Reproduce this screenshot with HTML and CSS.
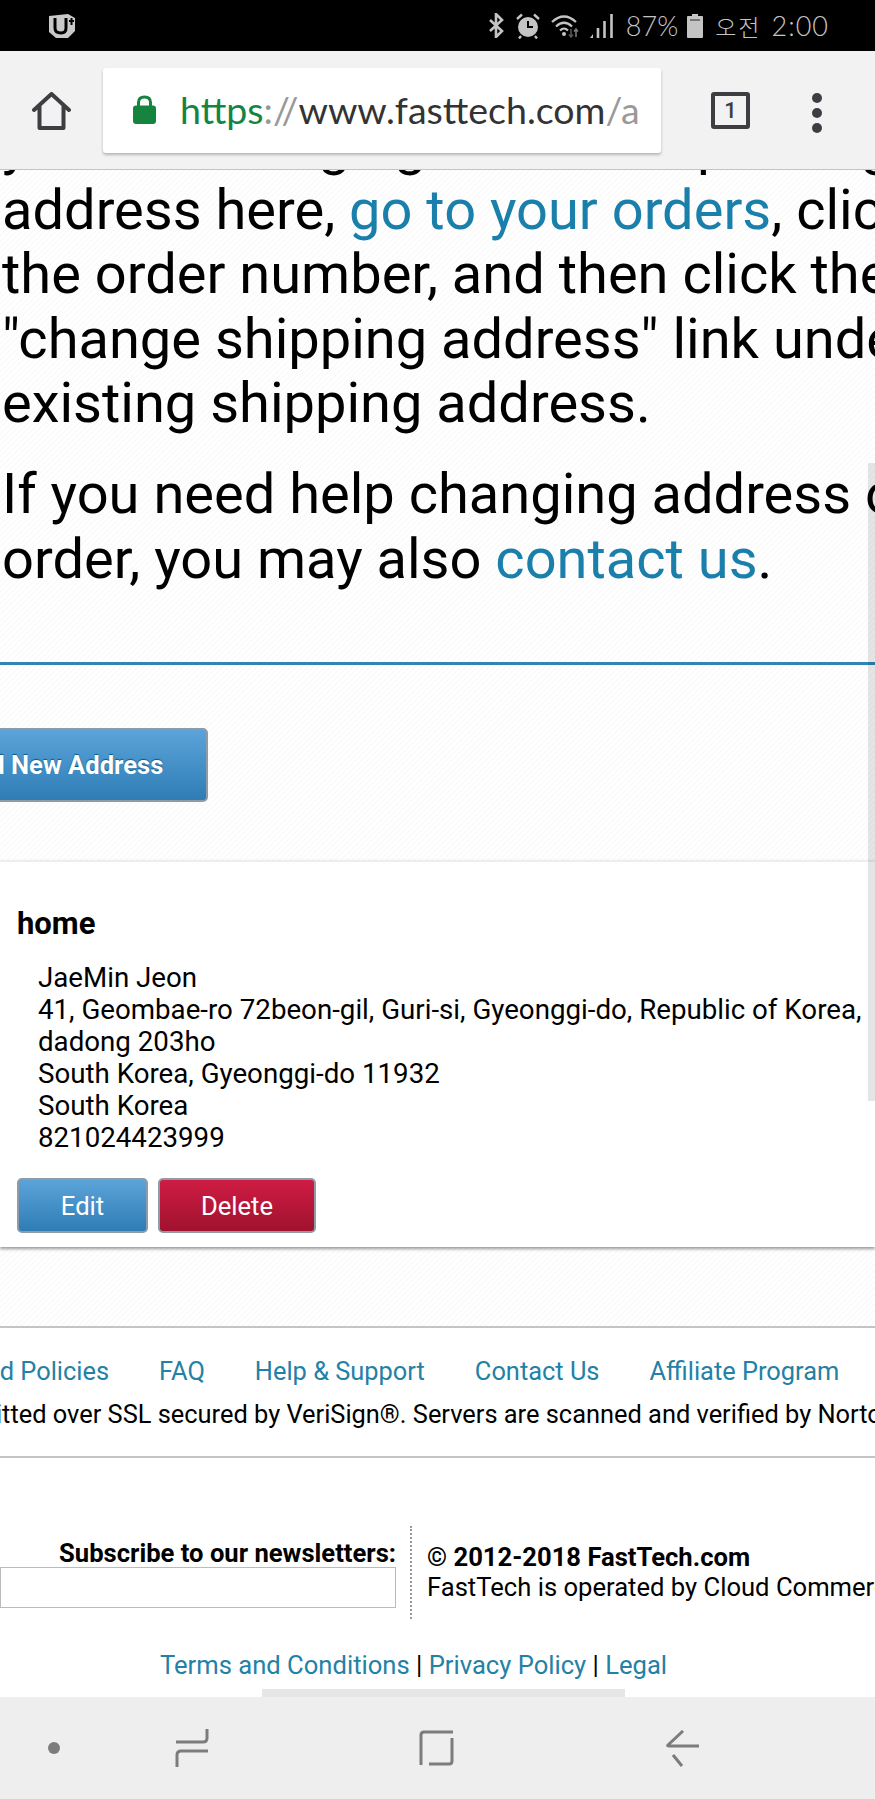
FILE: index.html
```html
<!DOCTYPE html>
<html>
<head>
  <meta charset="utf-8" />
  <title>Address Book</title>
  <meta name="viewport" content="width=device-width, initial-scale=1">
  <link rel="stylesheet" href="styles.css">
</head>
<body>
  <div class="status">
    <svg class="status-logo" viewBox="0 0 31 26">
      <path d="M3 3 L22 1 L29 5 L29 18 L22 25 L10 25 L3 19 Z" fill="#c9c9c9" />
      <path d="M9 5 V15 Q9 20 15 20 Q20 20 20 15 V5" fill="none" stroke="#000" stroke-width="3" />
      <path d="M23 8 h5 M25.5 5 v7" stroke="#000" stroke-width="2" />
    </svg>
    <div class="status-right">
      <svg class="ic-bt" viewBox="0 0 16 25"><path d="M2 7 L14 18 L8 24 V1 L14 7 L2 18" fill="none" stroke="#c4c4c4" stroke-width="2.6" /></svg>
      <svg class="ic-alarm" viewBox="0 0 26 26">
        <circle cx="13" cy="14" r="10" fill="#c4c4c4" />
        <path d="M13 8 V14 H18" fill="none" stroke="#000" stroke-width="2" />
        <path d="M2 6 L7 1.5 M24 6 L19 1.5 M6 23 L4 25.5 M20 23 L22 25.5" stroke="#c4c4c4" stroke-width="2.4" />
      </svg>
      <svg class="ic-wifi" viewBox="0 0 28 24">
        <path d="M1 8 Q13 -3 25 8 M5 12.5 Q13 5 21 12.5 M9 16.5 Q13 12.5 17 16.5" fill="none" stroke="#c4c4c4" stroke-width="2.2" />
        <circle cx="13" cy="20" r="2" fill="#c4c4c4" />
        <path d="M20 15 V23 M18 20.5 L20 23 L22 20.5" fill="none" stroke="#555" stroke-width="1.6" />
        <path d="M25 23 V15 M23 17.5 L25 15 L27 17.5" fill="none" stroke="#777" stroke-width="1.6" />
      </svg>
      <svg class="ic-signal" viewBox="0 0 25 26">
        <path d="M1 25 L4 21 V25 Z" fill="#c4c4c4" />
        <path d="M9 25 V15 M15.5 25 V8 M22.5 25 V1" stroke="#c4c4c4" stroke-width="2.6" />
      </svg>
      <span class="pct">87%</span>
      <svg class="ic-batt" viewBox="0 0 16 24">
        <path d="M5 0 H11 V2 H15 Q16 2 16 3 V23 Q16 24 15 24 H1 Q0 24 0 23 V3 Q0 2 1 2 H5 Z" fill="#c4c4c4" />
        <path d="M3 6 H13" stroke="#555" stroke-width="1.4" />
      </svg>
      <span class="ampm">오전</span>
      <span class="clock">2:00</span>
    </div>
  </div>

  <div class="toolbar">
    <svg class="ic-home" viewBox="0 0 39 38">
      <path d="M2 18 L19.5 2 L37 18 M7.5 14 V36 H31.5 V14" fill="none" stroke="#3e3e42" stroke-width="4" stroke-linejoin="round" stroke-linecap="round" />
    </svg>
    <div class="urlbar">
      <svg class="ic-lock" viewBox="0 0 23 29">
        <path d="M5.5 12 V7.5 Q5.5 2 11.5 2 Q17.5 2 17.5 7.5 V12" fill="none" stroke="#16843f" stroke-width="3" />
        <rect x="0" y="10.5" width="23" height="18.5" rx="3" fill="#16843f" />
      </svg>
      <div class="url"><span class="url-scheme">https</span><span class="url-sep">://</span>www.fasttech.com<span class="url-sep">/a</span></div>
    </div>
    <div class="tabs">1</div>
    <div class="menu"><i></i><i></i><i></i></div>
  </div>

  <main class="page">
    <section class="intro">
      <p class="first">you are changing an order's packing<br>address here, <a href="#">go to your orders</a>, click<br>the order number, and then click the<br>"change shipping address" link under<br>existing shipping address.</p>
      <p>If you need help changing address on<br>order, you may also <a href="#">contact us</a>.</p>
    </section>

    <section class="actions">
      <a class="btn btn-add" href="#">Add New Address</a>
    </section>

    <section class="card">
      <h3>home</h3>
      <div class="addr">
        JaeMin Jeon<br>
        41, Geombae-ro 72beon-gil, Guri-si, Gyeonggi-do, Republic of Korea,<br>
        dadong 203ho<br>
        South Korea, Gyeonggi-do 11932<br>
        South Korea<br>
        821024423999
      </div>
      <div class="card-btns">
        <a class="btn btn-edit" href="#">Edit</a>
        <a class="btn btn-delete" href="#">Delete</a>
      </div>
    </section>

    <div class="spacer"></div>

    <footer class="footer">
      <div class="foot-links">
        <a href="#">Terms and Policies</a>
        <a href="#">FAQ</a>
        <a href="#">Help &amp; Support</a>
        <a href="#">Contact Us</a>
        <a href="#">Affiliate Program</a>
      </div>
      <div class="secure">All data is transmitted over SSL secured by VeriSign®. Servers are scanned and verified by Norton</div>
      <div class="foot-main">
        <div class="subscribe">
          <label for="news">Subscribe to our newsletters:</label>
          <input id="news" type="text" />
        </div>
        <div class="copy">
          <b>© 2012-2018 FastTech.com</b><br>
          FastTech is operated by Cloud Commerce
        </div>
      </div>
      <div class="legal"><a href="#">Terms and Conditions</a> | <a href="#">Privacy Policy</a> | <a href="#">Legal</a></div>
    </footer>

    <div class="scroll-v"></div>
    <div class="scroll-h"></div>
  </main>

  <nav class="softkeys">
    <span class="key-dot"></span>
    <svg class="key-recent" viewBox="0 0 34 40"><path d="M32 1 V10 Q32 14 28 14 H1 M33 23 H6 Q2 23 2 27 V39" fill="none" stroke="#7c7c7c" stroke-width="3" /></svg>
    <svg class="key-home" viewBox="0 0 35 36"><path d="M34 2 H5 Q2 2 2 5 V35 M33 8 V31 Q33 34 30 34 H10" fill="none" stroke="#7c7c7c" stroke-width="3" /></svg>
    <svg class="key-back" viewBox="0 0 34 37"><path d="M18 1 L3 15 Q2 16 4 16 H34 M8 25 L17 36" fill="none" stroke="#7c7c7c" stroke-width="3" /></svg>
  </nav>
</body>
</html>
```

FILE: styles.css
```css
html,
body {
  padding: 0;
  margin: 0;
  height: 100%;
  width: 100%;
}

* {
  box-sizing: border-box;
}

body {
  display: flex;
  flex-direction: column;
  overflow: hidden;
  font-family: Roboto, "Liberation Sans", sans-serif;
  color: #000;
  background: #fff;
}

a {
  color: #1b7fab;
  text-decoration: none;
}

/* status bar */
.status {
  height: 51px;
  flex: none;
  background: #000;
  display: flex;
  align-items: center;
  justify-content: space-between;
  padding: 0 46px 0 46px;
  color: #c4c4c4;
}

.status-logo {
  width: 31px;
  height: 26px;
}

.status-right {
  display: flex;
  align-items: center;
}

.ic-bt {
  width: 16px;
  height: 25px;
}

.ic-alarm {
  width: 26px;
  height: 26px;
  margin-left: 11px;
}

.ic-wifi {
  width: 28px;
  height: 24px;
  margin-left: 10px;
}

.ic-signal {
  width: 25px;
  height: 26px;
  margin-left: 10px;
}

.pct {
  font: 300 27px Lato, sans-serif;
  margin-left: 12px;
}

.ic-batt {
  width: 16px;
  height: 24px;
  margin-left: 9px;
}

.ampm {
  font: 300 23px "Noto Sans CJK KR", sans-serif;
  letter-spacing: 2px;
  margin-left: 12px;
}

.clock {
  font: 300 27px Lato, sans-serif;
  margin-left: 10px;
  letter-spacing: 1px;
}

/* browser toolbar */
.toolbar {
  height: 119px;
  flex: none;
  background: #f2f2f2;
  border-bottom: 1px solid #c4c4c4;
  display: flex;
  align-items: flex-start;
  padding: 17px 0 0 32px;
  position: relative;
  z-index: 2;
}

.ic-home {
  width: 39px;
  height: 38px;
  margin-top: 24px;
}

.urlbar {
  width: 558px;
  height: 85px;
  margin-left: 32px;
  background: #fff;
  border-radius: 3px;
  box-shadow: 0 2px 3px rgba(0, 0, 0, 0.25);
  display: flex;
  align-items: center;
  padding: 0 16px 0 30px;
}

.ic-lock {
  width: 23px;
  height: 29px;
  flex: none;
  margin-top: -3px;
}

.url {
  margin-left: 24px;
  font: 400 37.5px Lato, sans-serif;
  color: #333;
  white-space: nowrap;
  overflow: hidden;
  margin-top: -3px;
}

.url-scheme {
  color: #16843f;
}

.url-sep {
  color: #999;
}

.tabs {
  width: 39px;
  height: 37px;
  margin: 24px 0 0 50px;
  border: 4px solid #3e3e42;
  border-radius: 3px;
  font: 500 22px/29px Roboto, sans-serif;
  color: #3e3e42;
  text-align: center;
}

.menu {
  display: flex;
  flex-direction: column;
  gap: 5px;
  margin: 25px 0 0 62px;
}

.menu i {
  width: 10px;
  height: 10px;
  border-radius: 50%;
  background: #3e3e42;
}

/* page area */
.page {
  flex: 1;
  min-height: 0;
  overflow: hidden;
  position: relative;
}

.intro {
  padding: 0 0 71px 2px;
  border-bottom: 3px solid #2f86b4;
  background: repeating-linear-gradient(135deg, #fff 0 2px, #fbfbfb 2px 4px);
  font-size: 56px;
  line-height: 64.4px;
  white-space: nowrap;
}

.intro p {
  margin: 27px 0 0;
}

.intro p.first {
  margin-top: -56.7px;
}

.actions {
  padding: 63px 0 58px;
  background: repeating-linear-gradient(135deg, #fff 0 2px, #fbfbfb 2px 4px);
}

.btn {
  display: flex;
  align-items: center;
  justify-content: center;
  border: 2px solid #8f9ba6;
  border-radius: 5px;
  color: #fff;
  font-size: 25.6px;
}

.btn-add,
.btn-edit {
  background: linear-gradient(#5ba4da, #2f7cb5);
}

.btn-add {
  width: 294px;
  height: 74px;
  margin-left: -86px;
  font-weight: 700;
  text-shadow: 0 -1px 1px #0b5a80;
}

.card {
  background: #fff;
  border-top: 2px solid #eeeeee;
  height: 387px;
  padding: 46px 0 0 17px;
  box-shadow: 0 2px 3px rgba(0, 0, 0, 0.4);
  position: relative;
}

.card h3 {
  margin: 0;
  font-size: 31px;
  line-height: 32px;
  font-weight: 700;
}

.addr {
  margin: 22px 0 0 21px;
  font-size: 27.7px;
  line-height: 32px;
  white-space: nowrap;
}

.card-btns {
  display: flex;
  gap: 10px;
  margin-top: 24px;
}

.btn-edit {
  width: 131px;
  height: 55px;
}

.btn-delete {
  width: 158px;
  height: 55px;
  background: linear-gradient(#cf1c43, #a0122f);
}

.spacer {
  height: 79px;
  background: repeating-linear-gradient(135deg, #fff 0 2px, #fbfbfb 2px 4px);
}

/* footer */
.footer {
  border-top: 2px solid #c4c4c4;
  background: #fff;
  font-size: 25.6px;
}

.foot-links {
  display: flex;
  gap: 50px;
  margin-left: -105.8px;
  padding-top: 27px;
  font-size: 25.4px;
  line-height: 32px;
  white-space: nowrap;
}

.foot-links a {
  color: #2381a5;
}

.secure {
  margin-left: -201px;
  margin-top: 11px;
  font-size: 25.4px;
  line-height: 32px;
  white-space: nowrap;
  padding-bottom: 26px;
  border-bottom: 2px solid #c4c4c4;
  width: 1300px;
}

.foot-main {
  display: flex;
  margin-top: 68px;
  height: 93px;
}

.subscribe {
  flex: none;
  width: 396px;
  text-align: right;
  padding-top: 13px;
}

.subscribe label {
  display: block;
  font-weight: 700;
  line-height: 28px;
}

.subscribe input {
  display: block;
  width: 100%;
  height: 41px;
  border: 1px solid #bbb;
  background: #fff;
}

.copy {
  flex: none;
  margin-left: 14px;
  padding: 16px 0 0 15px;
  border-left: 2px dotted #999;
  line-height: 30px;
  white-space: nowrap;
}

.copy b {
  font-weight: 700;
}

.legal {
  margin: 30px 0 0 160px;
  line-height: 32px;
}

.legal a {
  color: #2381a5;
}

/* overlay scrollbars */
.scroll-v {
  position: absolute;
  right: 0;
  top: 293px;
  width: 7px;
  height: 638px;
  background: rgba(0, 0, 0, 0.1);
}

.scroll-h {
  position: absolute;
  left: 262px;
  bottom: 0;
  width: 363px;
  height: 8px;
  background: #e6e6e6;
}

/* android keys */
.softkeys {
  height: 102px;
  flex: none;
  background: #eeeeee;
  display: flex;
  align-items: center;
  padding-left: 48px;
  position: relative;
  z-index: 2;
}

.key-dot {
  width: 12px;
  height: 12px;
  border-radius: 50%;
  background: #7c7c7c;
}

.key-recent {
  width: 34px;
  height: 40px;
  margin-left: 115px;
}

.key-home {
  width: 35px;
  height: 36px;
  margin-left: 210px;
}

.key-back {
  width: 34px;
  height: 37px;
  margin-left: 211px;
}
```
